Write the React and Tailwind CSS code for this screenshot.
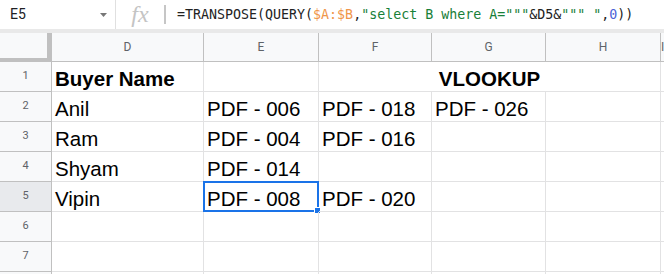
import React from 'react';

const colWidths = ['w-[152px]', 'w-[115px]', 'w-[113px]', 'w-[114px]', 'w-[115px]', 'flex-1'];
const colNames = ['D', 'E', 'F', 'G', 'H', 'I'];

const rows = [
  ['Anil', 'PDF - 006', 'PDF - 018', 'PDF - 026', '', ''],
  ['Ram', 'PDF - 004', 'PDF - 016', '', '', ''],
  ['Shyam', 'PDF - 014', '', '', '', ''],
  ['Vipin', 'PDF - 008', 'PDF - 020', '', '', ''],
  ['', '', '', '', '', ''],
  ['', '', '', '', '', ''],
  ['', '', '', '', '', ''],
];

const RowHeader = ({ n, active }) => (
  <div
    className={`w-[52px] shrink-0 border-r border-b border-[#c0c0c0] flex items-center justify-center text-[11px] text-[#5f6368] font-['Roboto',sans-serif] ${
      active ? 'bg-[#e8eaed]' : 'bg-[#f8f9fa]'
    }`}
  >
    {n}
  </div>
);

const FormulaBar = () => (
  <div className="flex h-[29px] bg-white">
    {/* name box */}
    <div className="w-[116px] shrink-0 border-r border-[#e0e0e0] flex items-center justify-between pl-[10px] pr-[8px]">
      <span className="text-[14px] text-[#202124] font-['Roboto',sans-serif]">E5</span>
      <svg width="7" height="4" viewBox="0 0 7 4">
        <path d="M0 0h7L3.5 4z" fill="#777" />
      </svg>
    </div>
    <div className="w-[48px] shrink-0 flex items-center justify-center">
      <span className="text-[24px] italic text-[#c4c4c4] font-['Liberation_Serif',serif] leading-none -mt-[2px]">fx</span>
    </div>
    <div className="w-[2px] my-[5px] bg-[#c6c6c6] shrink-0" />
    <div className="pl-[11px] flex items-center whitespace-pre text-[13.3px] text-[#222] font-['DejaVu_Sans_Mono',monospace]">
      <span>=TRANSPOSE(QUERY(</span>
      <span className="text-[#f0964a]">$A:$B</span>
      <span>,</span>
      <span className="text-[#188038]">"select B where A="""</span>
      <span>&D5&</span>
      <span className="text-[#188038]">""" "</span>
      <span>,</span>
      <span className="text-[#4b62d6]">0</span>
      <span>))</span>
    </div>
  </div>
);

const Cell = ({ w, children, bold, selected }) => (
  <div
    className={`${w} shrink-0 relative border-r border-b border-[#e2e2e3] flex items-end pl-[3px] pb-[1px] text-[20.5px] leading-[23px] text-black whitespace-nowrap ${
      bold ? 'font-bold' : ''
    }`}
  >
    {children}
    {selected && (
      <div className="absolute -left-[1px] -top-[1px] w-[116px] h-[31px] border-2 border-[#1a73e8]">
        <div className="absolute -right-[4px] -bottom-[4px] w-[7px] h-[7px] bg-[#1a73e8] border border-white" />
      </div>
    )}
  </div>
);

export default function App() {
  return (
    <div className="w-[664px] h-[274px] overflow-hidden bg-white font-['Liberation_Sans',Arial,sans-serif]">
      <FormulaBar />
      <div className="h-[4px] bg-[#e9e9e9]" />

      {/* column headers */}
      <div className="flex h-[29px]">
        <div className="w-[52px] shrink-0 bg-[#f8f9fa] border-r-[5px] border-b-[4px] border-[#c0c0c0]" />
        {colNames.map((c, i) => (
          <div
            key={c}
            className={`${colWidths[i]} shrink-0 bg-[#f8f9fa] border-r border-b border-[#c0c0c0] flex items-center justify-center text-[12px] text-[#5f6368] font-['Roboto',sans-serif]`}
          >
            {c}
          </div>
        ))}
      </div>

      {/* row 1 */}
      <div className="flex h-[30px]">
        <RowHeader n={1} />
        <Cell w="w-[152px]" bold>Buyer Name</Cell>
        <Cell w="w-[115px]" />
        <div className="w-[342px] shrink-0 border-r border-b border-[#e2e2e3] flex items-end justify-center pb-[1px] text-[20.5px] leading-[23px] font-bold">
          VLOOKUP
        </div>
        <div className="flex-1 border-b border-[#e2e2e3]" />
      </div>

      {rows.map((r, ri) => (
        <div key={ri} className="flex h-[30px]">
          <RowHeader n={ri + 2} active={ri === 3} />
          {r.map((v, ci) => (
            <Cell key={ci} w={colWidths[ci]} selected={ri === 3 && ci === 1}>
              {v}
            </Cell>
          ))}
        </div>
      ))}

      <div className="flex h-[30px]">
        <RowHeader />
      </div>
    </div>
  );
}
